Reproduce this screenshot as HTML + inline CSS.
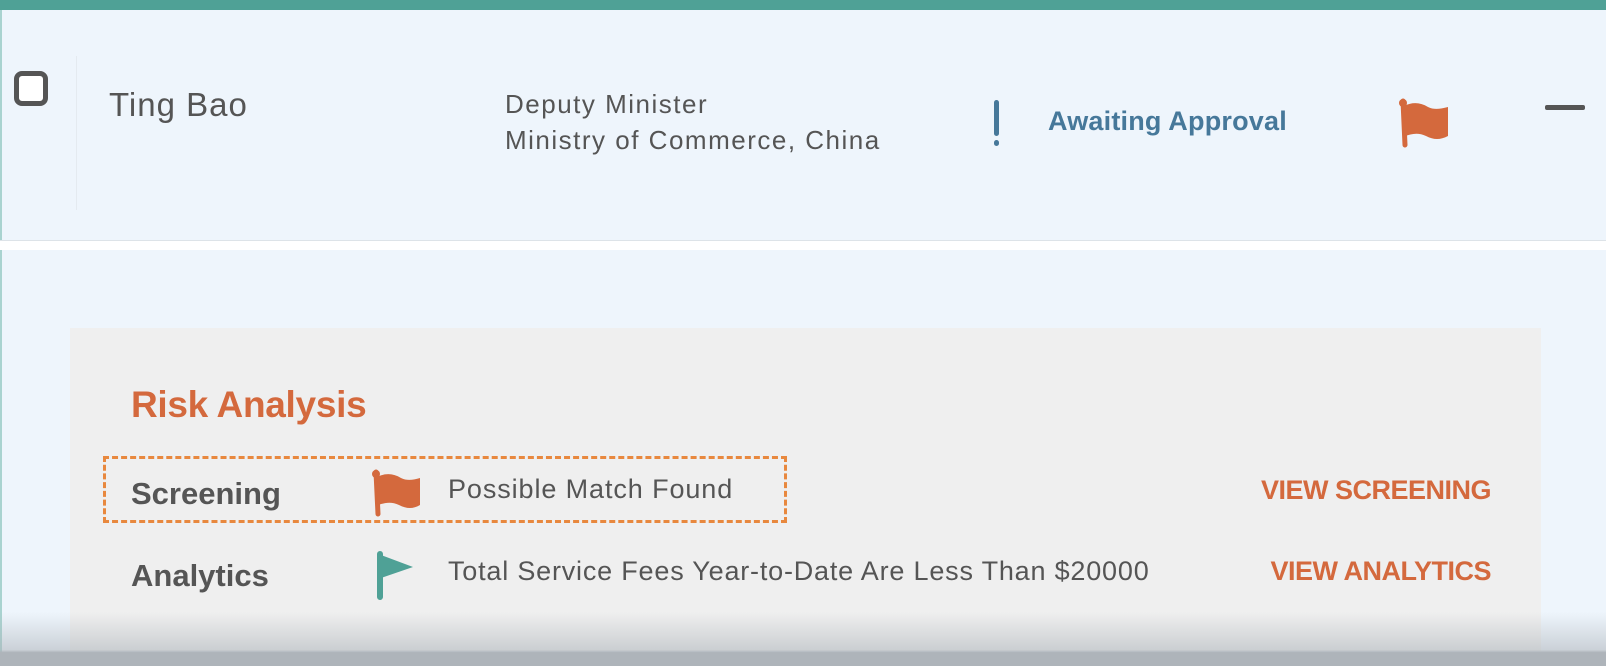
<!DOCTYPE html>
<html><head><meta charset="utf-8"><style>
*{margin:0;padding:0;box-sizing:border-box}
body{width:1606px;height:666px;overflow:hidden;background:#eef5fc;font-family:"Liberation Sans",sans-serif;position:relative;color:#555}
.a{position:absolute;white-space:nowrap}
</style></head><body>
<div class="a" style="left:0;top:0;width:1606px;height:10px;background:#4fa196"></div>
<div class="a" style="left:0;top:10px;width:2px;height:656px;background:#a9d3d0"></div>
<div class="a" style="left:0;top:240px;width:1606px;height:1px;background:#dde3e8"></div>
<div class="a" style="left:0;top:241px;width:1606px;height:9px;background:#fff"></div>
<div class="a" style="left:76px;top:56px;width:1px;height:154px;background:#e4eaf0"></div>
<div class="a" style="left:14px;top:71px;width:34px;height:35px;border:5px solid #555;border-radius:8px;background:#fff"></div>
<div class="a" style="left:109px;top:86px;font-size:33px;color:#555;letter-spacing:1px">Ting Bao</div>
<div class="a" style="left:505px;top:86px;font-size:26px;line-height:36px;color:#555;letter-spacing:1.5px">Deputy Minister<br>Ministry of Commerce, China</div>
<div class="a" style="left:994px;top:100px;width:5px;height:36px;background:#46789a;border-radius:3px"></div>
<div class="a" style="left:994px;top:140px;width:5px;height:6px;background:#46789a;border-radius:3px"></div>
<div class="a" style="left:1048px;top:106px;font-size:27px;font-weight:bold;color:#46789a;letter-spacing:0.2px">Awaiting Approval</div>
<svg class="a" style="left:1398px;top:98px" width="54" height="50" viewBox="0 0 54 50"><path d="M5 3 L7 47" stroke="#d4693d" stroke-width="5" stroke-linecap="round"/><circle cx="5" cy="5" r="4" fill="#d4693d"/><path d="M6 8 C14 4 22 4 30 9 C36 12 42 11 50 9 L50 38 C42 42 36 42 28 38 C20 34 13 36 7 38 Z" fill="#d4693d"/></svg>
<div class="a" style="left:1545px;top:105px;width:40px;height:5px;background:#555;border-radius:2px"></div>
<div class="a" style="left:70px;top:328px;width:1471px;height:323px;background:#efefef"></div>
<div class="a" style="left:131px;top:384px;font-size:37px;font-weight:bold;color:#d4693d;letter-spacing:-0.3px">Risk Analysis</div>
<div class="a" style="left:103px;top:456px;width:684px;height:67px;border:3px dashed #e8883e"></div>
<div class="a" style="left:131px;top:476px;font-size:31px;font-weight:bold;color:#555">Screening</div>
<svg class="a" style="left:371px;top:469px" width="54" height="50" viewBox="0 0 54 50"><path d="M5 3 L7 45" stroke="#d4693d" stroke-width="5" stroke-linecap="round"/><circle cx="5" cy="5" r="4" fill="#d4693d"/><path d="M6 8 C14 4 22 4 30 9 C36 12 42 11 49 9 L49 36 C42 40 36 40 28 36 C20 32 13 34 7 36 Z" fill="#d4693d"/></svg>
<div class="a" style="left:448px;top:474px;font-size:27px;color:#555;letter-spacing:0.9px">Possible Match Found</div>
<div class="a" style="right:115px;top:475px;font-size:27px;font-weight:bold;color:#d4693d;letter-spacing:-0.5px">VIEW SCREENING</div>
<div class="a" style="left:131px;top:558px;font-size:31px;font-weight:bold;color:#555">Analytics</div>
<svg class="a" style="left:372px;top:551px" width="50" height="50" viewBox="0 0 50 50"><path d="M8 3 L8 46" stroke="#4fa196" stroke-width="6" stroke-linecap="round"/><path d="M9 4 L41 16 L9 27 Z" fill="#4fa196"/></svg>
<div class="a" style="left:448px;top:556px;font-size:27px;color:#555;letter-spacing:0.8px">Total Service Fees Year-to-Date Are Less Than $20000</div>
<div class="a" style="right:115px;top:556px;font-size:27px;font-weight:bold;color:#d4693d;letter-spacing:-0.5px">VIEW ANALYTICS</div>
<div class="a" style="left:0;top:612px;width:1606px;height:54px;background:linear-gradient(to bottom,rgba(174,180,186,0),rgba(174,180,186,0.55) 70%,#aeb4ba 75%,#aeb4ba)"></div>
</body></html>
